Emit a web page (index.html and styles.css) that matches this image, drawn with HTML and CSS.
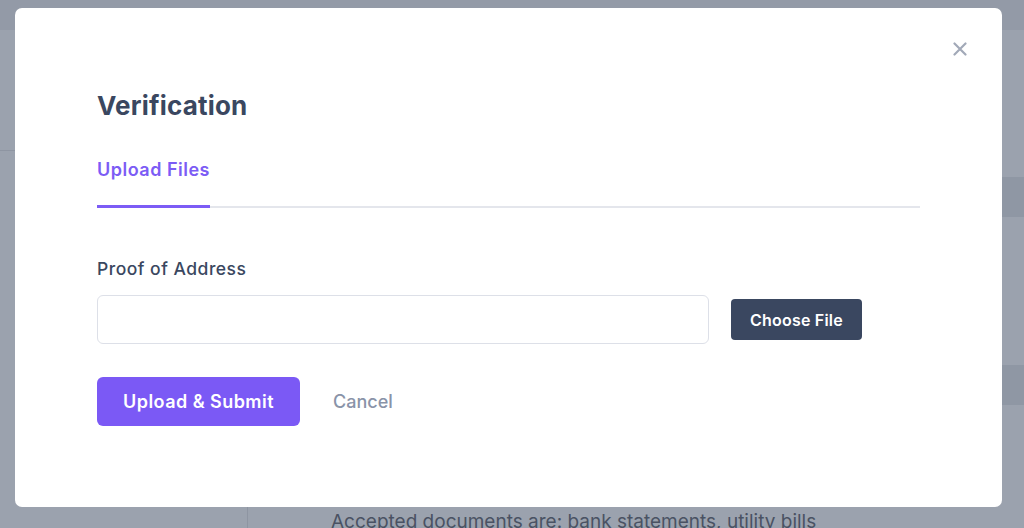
FILE: index.html
```html
<!DOCTYPE html>
<html>
<head>
<meta charset="utf-8">
<link rel="stylesheet" href="styles.css">
</head>
<body>
<div class="page">
  <header class="topbar"></header>
  <div class="layout">
    <aside class="sidebar">
      <div class="side-block"></div>
    </aside>
    <main class="main">
      <div class="band"></div>
      <div class="spacer1"></div>
      <div class="band"></div>
      <div class="spacer2"></div>
      <p class="note">Accepted documents are: bank statements, utility bills</p>
    </main>
  </div>
</div>
<div class="modal">
  <button class="close" aria-label="Close">
    <svg width="14" height="14" viewBox="0 0 14 14"><path d="M1.5 1.5L12.5 12.5M12.5 1.5L1.5 12.5" stroke="#a2a9b8" stroke-width="2.2" stroke-linecap="round" fill="none"/></svg>
  </button>
  <h2 class="title">Verification</h2>
  <div class="tabs">
    <div class="tab active">Upload Files</div>
  </div>
  <label class="label">Proof of Address</label>
  <div class="file-row">
    <div class="input"></div>
    <button class="choose">Choose File</button>
  </div>
  <div class="actions">
    <button class="submit">Upload &amp; Submit</button>
    <button class="cancel">Cancel</button>
  </div>
</div>
</body>
</html>
```
FILE: styles.css
```css
* { box-sizing: border-box; }
html, body { margin: 0; padding: 0; }
body {
  width: 1024px;
  height: 528px;
  overflow: hidden;
  font-family: "Inter", "Lato", sans-serif;
  background: #9ba2ae;
  position: relative;
}
.page { height: 528px; display: flex; flex-direction: column; }
.topbar { height: 30px; background: #939aa7; flex: none; }
.layout { flex: 1; display: flex; }
.sidebar { width: 248px; border-right: 1px solid #8e95a2; background: #9ba2ae; }
.side-block { height: 121px; border-bottom: 1px solid #8e95a2; }
.main { flex: 1; padding-top: 147px; background: #9ba2ae; }
.band { height: 40px; background: #8f97a4; }
.spacer1 { height: 148px; }
.spacer2 { height: 105px; }
.note { margin: 0 0 0 83px; font-size: 19px; line-height: 24px; color: #4a5263; white-space: nowrap; }

.modal {
  position: absolute;
  left: 15px;
  top: 8px;
  width: 987px;
  height: 499px;
  background: #fff;
  border-radius: 7px;
  padding: 82px 82px 0 82px;
}
.close {
  position: absolute;
  top: 34px;
  right: 35px;
  width: 14px;
  height: 14px;
  padding: 0;
  border: 0;
  background: none;
  display: flex;
}
.title {
  margin: 0;
  font-size: 26px;
  line-height: 32px;
  font-weight: 700;
  color: #3a4760;
  letter-spacing: 0.2px;
}
.tabs {
  margin-top: 27px;
  border-bottom: 2px solid #e4e6ec;
  display: flex;
  width: 823px;
}
.tab {
  font-size: 18px;
  font-weight: 600;
  line-height: 26px;
  padding: 8px 0 22px;
  color: #7c5cf5;
  border-bottom: 3px solid #7c5cf5;
  margin-bottom: -2px;
  width: 113px;
  white-space: nowrap;
  letter-spacing: 0.5px;
}
.label {
  display: block;
  margin-top: 49px;
  font-size: 17.5px;
  font-weight: 500;
  line-height: 24px;
  color: #3a4760;
  letter-spacing: 0.5px;
}
.file-row {
  margin-top: 14px;
  display: flex;
  align-items: center;
  gap: 22px;
}
.input {
  width: 612px;
  height: 49px;
  border: 1px solid #dde0e8;
  border-radius: 6px;
}
.choose {
  width: 131px;
  height: 41px;
  border: 0;
  border-radius: 4px;
  background: #3a4760;
  color: #fff;
  font-family: inherit;
  font-size: 16px;
  font-weight: 600;
  padding: 0;
  letter-spacing: 0.2px;
}
.actions {
  margin-top: 33px;
  display: flex;
  align-items: center;
  gap: 33px;
}
.submit {
  width: 203px;
  height: 49px;
  border: 0;
  border-radius: 6px;
  background: #7b59f5;
  color: #fff;
  font-family: inherit;
  font-size: 18px;
  font-weight: 600;
  padding: 0;
  letter-spacing: 0.45px;
}
.cancel {
  border: 0;
  background: none;
  padding: 0;
  font-family: inherit;
  font-size: 18px;
  font-weight: 500;
  color: #8993a8;
}
```
